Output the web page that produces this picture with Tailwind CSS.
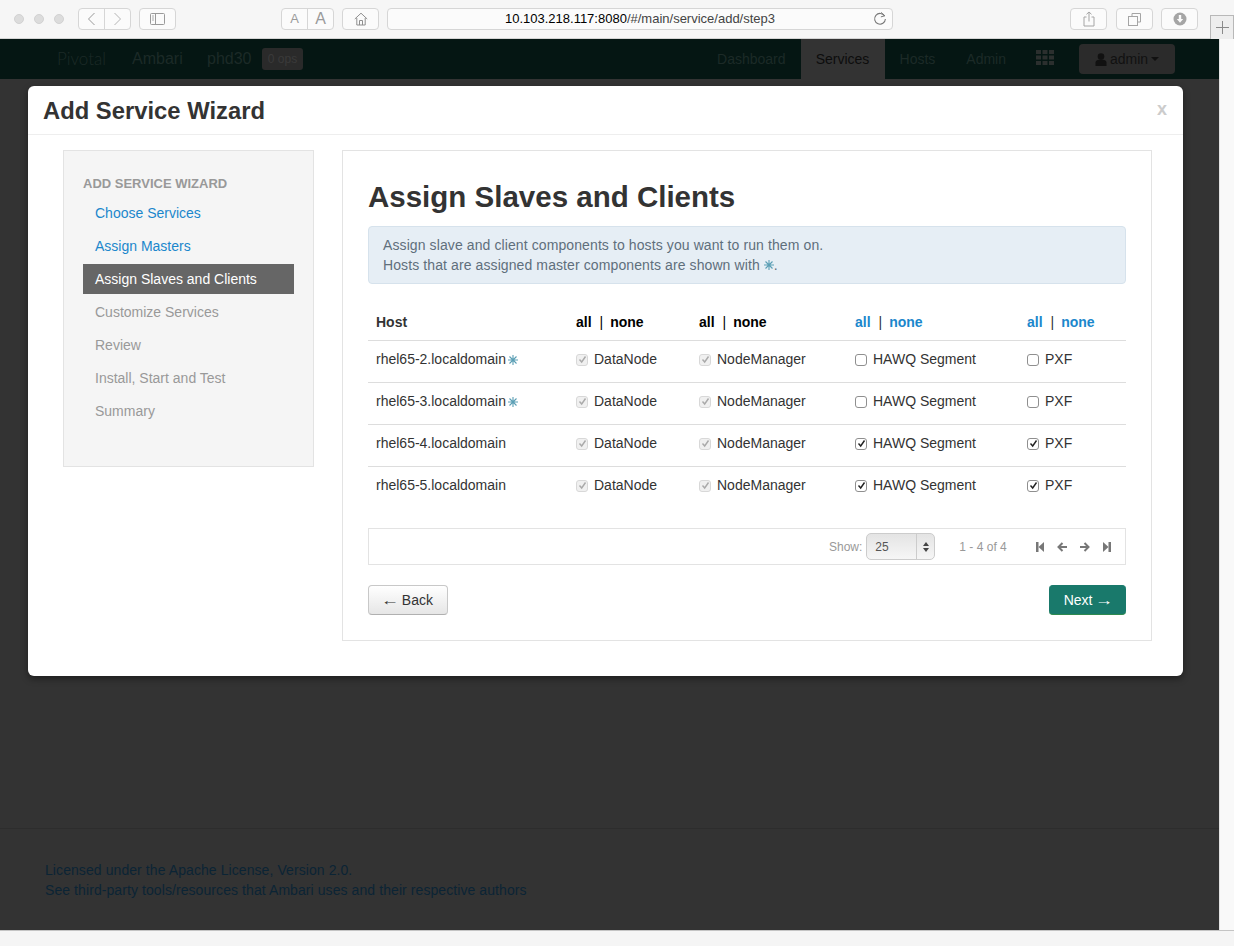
<!DOCTYPE html>
<html lang="en">
<head>
  <meta charset="UTF-8">
  <title>Add Service Wizard</title>
  <script src="https://cdn.jsdelivr.net/npm/@tailwindcss/browser@4"></script>
</head>
<body class="bg-[#333333] font-['Liberation_Sans',Arial,sans-serif] text-[14px] text-[#333333]">
<div class="relative w-[1234px] h-[946px] overflow-hidden flex flex-col">

  <!-- Browser toolbar -->
  <div class="h-[39px] shrink-0 bg-[#f6f6f6] border-b border-[#d4d4d4] flex items-start pt-[8px] pl-[14px] text-[#9a9a9a]">
    <div class="flex gap-[10px] mt-[6px]">
      <span class="w-[10px] h-[10px] rounded-full bg-[#dcdcdc] border border-[#d2d2d2]"></span>
      <span class="w-[10px] h-[10px] rounded-full bg-[#dcdcdc] border border-[#d2d2d2]"></span>
      <span class="w-[10px] h-[10px] rounded-full bg-[#dcdcdc] border border-[#d2d2d2]"></span>
    </div>
    <div class="flex ml-[14px] h-[22px] w-[53px] border border-[#d6d6d6] rounded-[4px] bg-[#fbfbfb]">
      <span class="flex-1 flex items-center justify-center border-r border-[#d6d6d6]"><svg width="9" height="14" viewBox="0 0 9 14" fill="none" stroke="#9a9a9a"><path d="M7.5 1 1.5 7l6 6"/></svg></span>
      <span class="flex-1 flex items-center justify-center"><svg width="9" height="14" viewBox="0 0 9 14" fill="none" stroke="#b5b5b5"><path d="M1.5 1l6 6-6 6"/></svg></span>
    </div>
    <div class="ml-[8px] h-[22px] w-[37px] border border-[#d6d6d6] rounded-[4px] bg-[#fbfbfb] flex items-center justify-center">
      <svg width="15" height="12" viewBox="0 0 15 12" fill="none" stroke="#9a9a9a"><rect x=".5" y=".5" width="14" height="11" rx="1"/><path d="M5.5 .5v11"/><path d="M2 3h2M2 5h2M2 7h2" stroke-width=".8"/></svg>
    </div>
    <div class="ml-[105px] flex h-[22px] w-[53px] border border-[#d6d6d6] rounded-[4px] bg-[#fbfbfb] leading-[20px] text-center">
      <span class="flex-1 border-r border-[#d6d6d6] text-[13px]">A</span>
      <span class="flex-1 text-[16px]">A</span>
    </div>
    <div class="ml-[8px] h-[22px] w-[37px] border border-[#d6d6d6] rounded-[4px] bg-[#fbfbfb] flex items-center justify-center">
      <svg width="14" height="14" viewBox="0 0 14 14" fill="none" stroke="#8f8f8f"><path d="M.8 7 7 1.2 13.2 7M2.8 6v7h8.4V6M5.5 13V8.5h3V13"/></svg>
    </div>
    <div class="relative ml-[8px] h-[22px] w-[506px] border border-[#d6d6d6] rounded-[4px] bg-[#fbfbfb] text-center text-[13px] leading-[20px] text-[#222222]">
      <span class="text-black">10.103.218.117:8080</span><span class="text-[#444444]">/#/main/service/add/step3</span>
      <svg class="absolute right-[5px] top-[2px]" width="14" height="15" viewBox="0 0 13 13" fill="none" stroke="#777777"><path d="M10.8 4.2A5 5 0 1 0 11.5 7"/><path d="M7.5 .8l3.4 3.2-3.6 1" stroke-width=".9"/></svg>
    </div>
    <div class="ml-[177px] h-[22px] w-[37px] border border-[#d6d6d6] rounded-[4px] bg-[#fbfbfb] flex items-center justify-center">
      <svg width="12" height="16" viewBox="0 0 12 16" fill="none" stroke="#a5a5a5"><path d="M3.5 6H1v9h10V6H8.500M6 10.500V1M3.500 3.300 6 1l2.500 2.300"/></svg>
    </div>
    <div class="ml-[9px] h-[22px] w-[37px] border border-[#d6d6d6] rounded-[4px] bg-[#fbfbfb] flex items-center justify-center">
      <svg width="13" height="13" viewBox="0 0 13 13" fill="none" stroke="#a5a5a5"><path d="M4 3V.5h8.500V9H10"/><rect x=".5" y="3.500" width="9" height="9"/></svg>
    </div>
    <div class="ml-[8px] h-[22px] w-[37px] border border-[#d6d6d6] rounded-[4px] bg-[#fbfbfb] flex items-center justify-center">
      <svg width="14" height="14" viewBox="0 0 14 14"><circle cx="7" cy="7" r="6.500" fill="#a5a5a5"/><path d="M5.800 3h2.400v4h2L7 10.800 3.800 7h2z" fill="#fbfbfb"/></svg>
    </div>
    <div class="ml-[12px] mt-[7px] h-[24px] flex-1 border border-b-0 border-[#b8b8b8] bg-[#eeeeee] flex items-center justify-center">
      <svg width="13" height="13" viewBox="0 0 13 13" stroke="#8a8a8a"><path d="M6.500 0v13M0 6.500h13"/></svg>
    </div>
  </div>

  <!-- Page + scrollbar -->
  <div class="flex-1 flex min-h-0">
    <div class="w-[1219px] flex flex-col">
      <!-- Navbar, dimmed by the modal backdrop -->
      <div class="h-[40px] shrink-0 bg-[#051613] flex items-center pl-[57px] pr-[44px] text-[#1c2a27]">
        <span class="font-['Lato',sans-serif] font-light text-[17px] w-[75px]">Pivotal</span>
        <span class="text-[16px] w-[75px]">Ambari</span>
        <span class="text-[16px] w-[55px]">phd30</span>
        <span class="h-[22px] w-[41px] rounded-[3px] bg-[#2a2a2a] text-[12px] leading-[22px] text-center text-[#3a3a3a]">0 ops</span>
        <div class="ml-auto flex items-center h-full">
          <span class="mr-[15px]">Dashboard</span>
          <span class="h-full w-[84px] bg-[#333333] flex items-center justify-center text-[#0d0d0d]">Services</span>
          <span class="ml-[15px]">Hosts</span>
          <span class="ml-[31px]">Admin</span>
          <svg class="ml-[30px] mb-[3px]" width="18" height="15" viewBox="0 0 18 15" fill="#2b2f2e"><rect width="5" height="4"/><rect x="6.500" width="5" height="4"/><rect x="13" width="5" height="4"/><rect y="5.500" width="5" height="4"/><rect x="6.500" y="5.500" width="5" height="4"/><rect x="13" y="5.500" width="5" height="4"/><rect y="11" width="5" height="4"/><rect x="6.500" y="11" width="5" height="4"/><rect x="13" y="11" width="5" height="4"/></svg>
          <div class="ml-[25px] h-[30px] w-[96px] rounded-[4px] bg-[#2b2b2b] flex items-center justify-center gap-[3px] text-[#111111]">
            <svg width="12" height="13" viewBox="0 0 12 13" fill="#111111"><circle cx="6" cy="3.500" r="3.300"/><path d="M.5 13V9.500C.5 7.500 2.500 6.500 6 6.500s5.500 1 5.500 3V13z"/></svg>
            <span>admin</span>
            <span class="w-0 h-0 border-x-[4px] border-x-transparent border-t-[4px] border-t-[#111111]"></span>
          </div>
        </div>
      </div>
      <div class="flex-1"></div>
      <!-- Footer -->
      <div class="h-[102px] shrink-0 border-t border-[#2d2d2d] pt-[31px] pl-[45px] leading-[20px] tracking-[0.08px] text-[#0b2435]">
        <p>Licensed under the Apache License, Version 2.0.</p>
        <p>See third-party tools/resources that Ambari uses and their respective authors</p>
      </div>
    </div>
    <div class="flex-1 bg-[#f9f9f9] border-l border-[#e3e3e3]"></div>
  </div>
  <div class="h-[16px] shrink-0 bg-[#f5f5f5] border-t border-[#c4c4c4]"></div>

  <!-- Modal -->
  <div class="absolute left-[28px] top-[86px] w-[1155px] h-[590px] bg-white rounded-[6px] shadow-[0_3px_7px_rgba(0,0,0,0.4)]">
    <div class="relative h-[49px] border-b border-[#eeeeee] pl-[15px] pt-[10px] font-bold text-[23.8px] leading-[30px]">
      Add Service Wizard
      <span class="absolute right-[16px] top-[11px] text-[#cccccc] text-[18px] leading-[24px]">x</span>
    </div>
    <div class="flex items-start pl-[35px] pt-[15px] gap-[28px]">
      <!-- Steps -->
      <div class="w-[251px] h-[317px] bg-[#f5f5f5] border border-[#e3e3e3] pl-[19px] pr-[19px] pt-[25px]">
        <p class="font-bold text-[13px] leading-[16px] text-[#999999] mb-[6px]">ADD SERVICE WIZARD</p>
        <div class="flex flex-col gap-[3px] leading-[30px]">
          <a class="pl-[12px] text-[#1b87cc]">Choose Services</a>
          <a class="pl-[12px] text-[#1b87cc]">Assign Masters</a>
          <a class="pl-[12px] bg-[#666666] text-white">Assign Slaves and Clients</a>
          <a class="pl-[12px] text-[#999999]">Customize Services</a>
          <a class="pl-[12px] text-[#999999]">Review</a>
          <a class="pl-[12px] text-[#999999]">Install, Start and Test</a>
          <a class="pl-[12px] text-[#999999]">Summary</a>
        </div>
      </div>

      <!-- Main panel -->
      <div class="w-[810px] h-[491px] border border-[#e3e3e3] px-[25px] pt-[26px]">
        <h2 class="font-bold text-[29.5px] leading-[40px]">Assign Slaves and Clients</h2>
        <div class="mt-[9px] h-[58px] rounded-[4px] bg-[#e6eef5] border border-[#d6e2ec] pl-[14px] pt-[8px] leading-[20px] tracking-[0.1px] text-[#5f6f7c]">
          <p>Assign slave and client components to hosts you want to run them on.</p>
          <p class="flex items-center">Hosts that are assigned master components are shown with&nbsp;<svg width="10" height="10" viewBox="0 0 10 10" stroke="#5b9fb5" stroke-width="1.100"><path d="M5 0v10M0 5h10M1.500 1.500l7 7M8.500 1.500l-7 7"/></svg>.</p>
        </div>

        <table class="mt-[20px] w-[758px] table-fixed border-collapse">
          <colgroup><col class="w-[200px]"><col class="w-[123px]"><col class="w-[156px]"><col class="w-[172px]"><col class="w-[107px]"></colgroup>
          <thead>
            <tr class="h-[36px] border-b border-[#dddddd] text-left font-bold">
              <th class="pl-[8px] pt-[2px] text-[#333333]">Host</th>
              <th class="pl-[8px] pt-[2px] text-black">all<span class="ml-[8px] mr-[7px] font-normal">|</span>none</th>
              <th class="pl-[8px] pt-[2px] text-black">all<span class="ml-[8px] mr-[7px] font-normal">|</span>none</th>
              <th class="pl-[8px] pt-[2px] text-[#333333]"><span class="text-[#1b87cc]">all</span><span class="ml-[8px] mr-[7px] font-normal">|</span><span class="text-[#1b87cc]">none</span></th>
              <th class="pl-[8px] pt-[2px] text-[#333333]"><span class="text-[#1b87cc]">all</span><span class="ml-[8px] mr-[7px] font-normal">|</span><span class="text-[#1b87cc]">none</span></th>
            </tr>
          </thead>
          <tbody id="rows"></tbody>
        </table>

        <!-- Pagination -->
        <div class="mt-[20px] h-[37px] border border-[#e3e3e3] flex items-center text-[12px] text-[#999999] pl-[460px]">
          <span>Show:</span>
          <div class="ml-[4px] w-[69px] h-[27px] rounded-[5px] border border-[#cccccc] bg-gradient-to-b from-[#e4e4e4] to-[#f6f6f6] flex items-center text-[12px] text-[#555555]">
            <span class="flex-1 pl-[8px]">25</span>
            <span class="w-[18px] h-full border-l border-[#cccccc] flex flex-col items-center justify-center gap-[2px]">
              <span class="w-0 h-0 border-x-[3px] border-x-transparent border-b-[4px] border-b-[#444444]"></span>
              <span class="w-0 h-0 border-x-[3px] border-x-transparent border-t-[4px] border-t-[#444444]"></span>
            </span>
          </div>
          <span class="ml-[24px] text-[#999999]">1 - 4 of 4</span>
          <svg class="ml-[29px]" width="8" height="10" viewBox="0 0 8 10" fill="#777777"><rect width="2.500" height="10"/><path d="M8 0v10L2.500 5z"/></svg>
          <svg class="ml-[13px]" width="10" height="10" viewBox="0 0 10 10" fill="none" stroke="#777777" stroke-width="2"><path d="M5.500 1 1.500 5l4 4M2 5h8"/></svg>
          <svg class="ml-[13px]" width="10" height="10" viewBox="0 0 10 10" fill="none" stroke="#777777" stroke-width="2"><path d="M4.500 1l4 4-4 4M8 5H0"/></svg>
          <svg class="ml-[13px]" width="8" height="10" viewBox="0 0 8 10" fill="#777777"><rect x="5.500" width="2.500" height="10"/><path d="M0 0v10l5.500-5z"/></svg>
        </div>

        <!-- Wizard buttons -->
        <div class="mt-[20px] flex justify-between">
          <button class="w-[80px] h-[30px] rounded-[4px] border border-[#c8c8c8] border-b-[#b0b0b0] bg-gradient-to-b from-white to-[#e6e6e6] text-[#333333]"><span class="inline-block scale-x-[1.3] mr-[1px]">←</span> Back</button>
          <button class="w-[77px] h-[30px] rounded-[4px] bg-[#19796b] border-t border-b border-[#19796b] border-b-[#2f8a4f] text-white">Next <span class="inline-block scale-x-[1.3] ml-[1px]">→</span></button>
        </div>
      </div>
    </div>
  </div>
</div>

<script>
  const rows = [
    { host: 'rhel65-2.localdomain', master: true, extra: false },
    { host: 'rhel65-3.localdomain', master: true, extra: false },
    { host: 'rhel65-4.localdomain', master: false, extra: true },
    { host: 'rhel65-5.localdomain', master: false, extra: true }
  ];
  const star = '<svg class="inline-block ml-[2px] align-[-1px]" width="10" height="10" viewBox="0 0 10 10" stroke="#5b9fb5" stroke-width="1.100"><path d="M5 0v10M0 5h10M1.500 1.500l7 7M8.500 1.500l-7 7"/></svg>';

  function box(label, checked, disabled) {
    const mark = checked ? `<svg class="w-[9px] h-[9px]" viewBox="0 0 9 9" fill="none" stroke="${disabled ? '#aaaaaa' : '#222222'}" stroke-width="1.400"><path d="M1.500 4.500 3.700 7l3.800-5.500"/></svg>` : '';
    const look = disabled ? 'bg-[#f0f0f0] border-[#d8d8d8]' : 'bg-white border-[#8f8f8f]';
    return `<td class="pl-[8px] pb-[3px]"><span class="flex items-center gap-[6px]"><span class="w-[12px] h-[12px] rounded-[3px] border flex items-center justify-center ${look}">${mark}</span>${label}</span></td>`;
  }

  document.getElementById('rows').innerHTML = rows.map((r, i) => `
    <tr class="h-[42px] ${i < rows.length - 1 ? 'border-b border-[#dddddd]' : ''}">
      <td class="pl-[8px] pb-[3px]">${r.host}${r.master ? star : ''}</td>
      ${box('DataNode', true, true)}
      ${box('NodeManager', true, true)}
      ${box('HAWQ Segment', r.extra, false)}
      ${box('PXF', r.extra, false)}
    </tr>`).join('');
</script>
</body>
</html>
